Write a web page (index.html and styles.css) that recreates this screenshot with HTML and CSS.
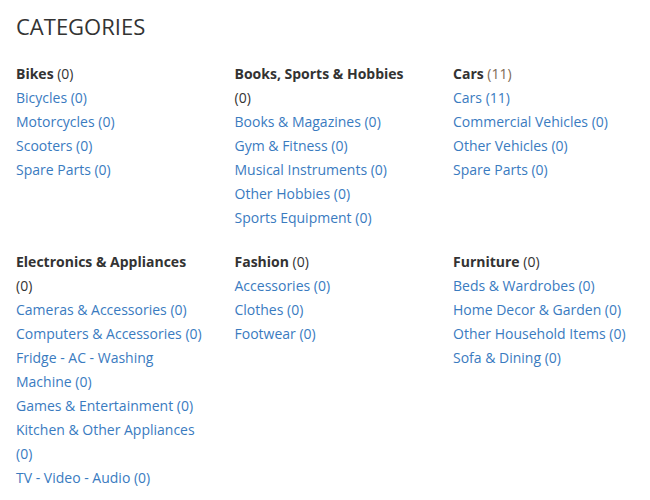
FILE: index.html
```html
<!DOCTYPE html>
<html>
<head>
<meta charset="utf-8">
<link rel="stylesheet" href="styles.css">
</head>
<body>
<div class="page">
  <h2 class="title">CATEGORIES</h2>
  <div class="grid">
    <div class="cat">
      <div class="head"><b>Bikes</b> (0)</div>
      <a href="#">Bicycles (0)</a>
      <a href="#">Motorcycles (0)</a>
      <a href="#">Scooters (0)</a>
      <a href="#">Spare Parts (0)</a>
    </div>
    <div class="cat">
      <div class="head"><b>Books, Sports &amp; Hobbies</b> (0)</div>
      <a href="#">Books &amp; Magazines (0)</a>
      <a href="#">Gym &amp; Fitness (0)</a>
      <a href="#">Musical Instruments (0)</a>
      <a href="#">Other Hobbies (0)</a>
      <a href="#">Sports Equipment (0)</a>
    </div>
    <div class="cat">
      <div class="head"><b>Cars</b> <span class="hot">(11)</span></div>
      <a href="#">Cars (11)</a>
      <a href="#">Commercial Vehicles (0)</a>
      <a href="#">Other Vehicles (0)</a>
      <a href="#">Spare Parts (0)</a>
    </div>
    <div class="cat">
      <div class="head"><b>Electronics &amp; Appliances</b> (0)</div>
      <a href="#">Cameras &amp; Accessories (0)</a>
      <a href="#">Computers &amp; Accessories (0)</a>
      <a href="#">Fridge - AC - Washing Machine (0)</a>
      <a href="#">Games &amp; Entertainment (0)</a>
      <a href="#">Kitchen &amp; Other Appliances (0)</a>
      <a href="#">TV - Video - Audio (0)</a>
    </div>
    <div class="cat">
      <div class="head"><b>Fashion</b> (0)</div>
      <a href="#">Accessories (0)</a>
      <a href="#">Clothes (0)</a>
      <a href="#">Footwear (0)</a>
    </div>
    <div class="cat">
      <div class="head"><b>Furniture</b> (0)</div>
      <a href="#">Beds &amp; Wardrobes (0)</a>
      <a href="#">Home Decor &amp; Garden (0)</a>
      <a href="#">Other Household Items (0)</a>
      <a href="#">Sofa &amp; Dining (0)</a>
    </div>
  </div>
</div>
</body>
</html>
```
FILE: styles.css
```css
html, body {
  margin: 0;
  padding: 0;
  background: #fff;
}
body {
  font-family: "Open Sans", "Liberation Sans", sans-serif;
  font-size: 14px;
  line-height: 24px;
  color: #333;
}
.page {
  padding: 10px 0 0 16px;
}
.title {
  margin: 0 0 20px;
  font-size: 22px;
  font-weight: 400;
  line-height: 32px;
  color: #333;
}
.grid {
  display: grid;
  grid-template-columns: repeat(3, 218.5px);
  row-gap: 20px;
}
.cat {
  display: flex;
  flex-direction: column;
  align-items: flex-start;
  padding-right: 31px;
}
.head b {
  font-weight: 700;
}
.hot {
  color: #7d6a55;
}
.cat a {
  color: #3a7bbf;
  text-decoration: none;
}
```
